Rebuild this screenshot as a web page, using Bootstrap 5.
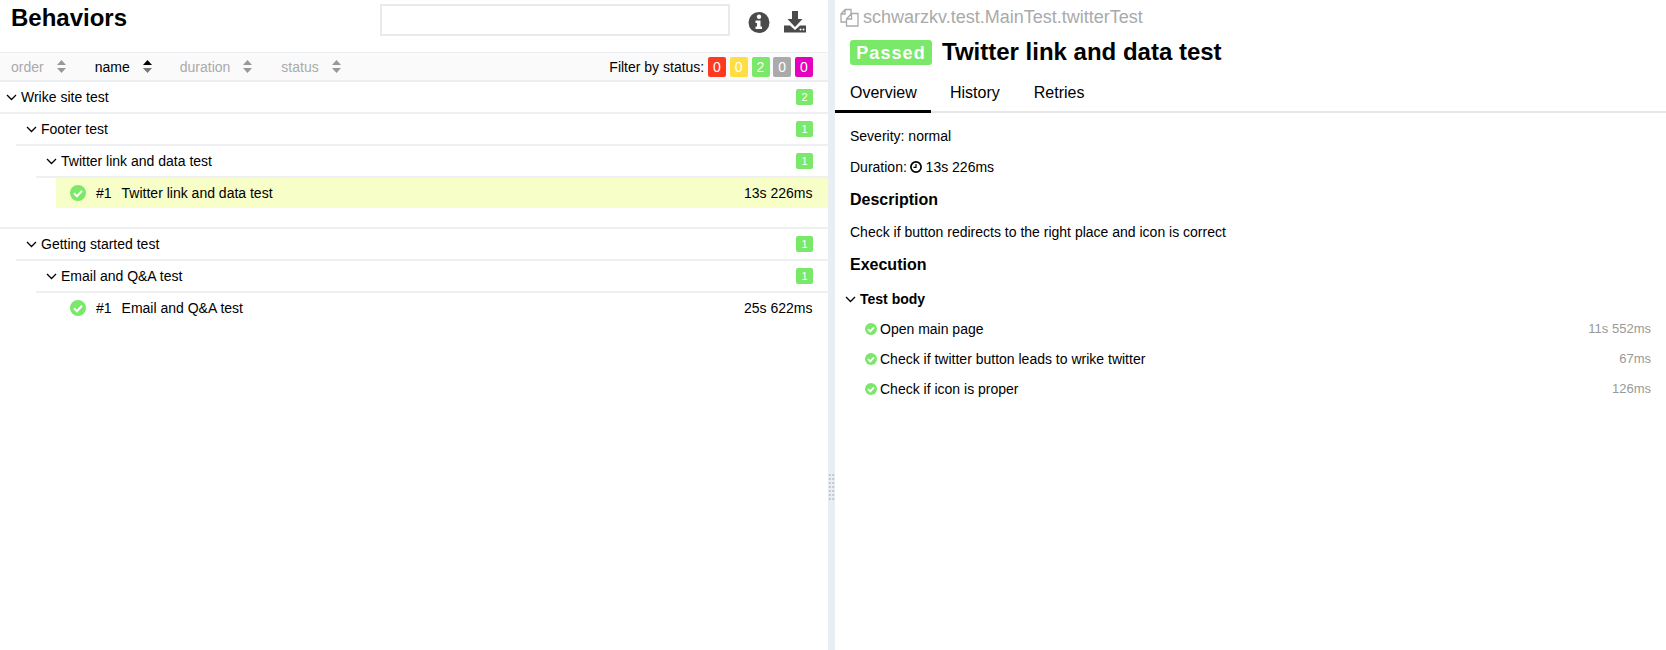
<!DOCTYPE html>
<html lang="en">
<head>
  <meta charset="UTF-8" />
  <title>Behaviors</title>
  <link href="https://cdn.jsdelivr.net/npm/bootstrap@5.3.0/dist/css/bootstrap.min.css" rel="stylesheet" />
  <style>
    html, body { height: 100%; overflow: hidden; }
    body { font-family: "Liberation Sans", Arial, sans-serif; font-size: 14px; line-height: 20px; color: #000; }
    .app-wrap { height: 650px; }
    .side-pane { width: 828px; flex: none; }
    .splitter { width: 7px; flex: none; background: #e9eef2; }
    .grip { width: 7px; height: 28px; margin-top: 473px; background-image: radial-gradient(circle, #bfc3c6 1.2px, transparent 1.4px); background-size: 3.5px 4px; }
    .main-pane { flex: 1; min-width: 0; }

    .side-head { height: 52px; padding: 3px 0 0 11px; }
    .side-title { font-size: 24px; line-height: 30px; font-weight: 700; margin: 0; }
    .search-box { width: 350px; height: 32px; margin: 1px 0 0 auto; border: 2px solid #e8ebee; }
    .head-icons { width: 98px; padding: 8px 0 0 18px; gap: 13px; }
    .sort-bar { height: 30px; background: #fafafa; border-top: 1px solid #eceff2; border-bottom: 2px solid #eceff2; padding: 0 15px 0 11px; }
    .sort-item { color: #aaa; margin-right: 26px; display: inline-flex; align-items: center; gap: 13px; }
    .sort-item.is-on { color: #000; }
    .stat-btn { width: 18px; height: 20px; border-radius: 2px; color: #fff; text-align: center; line-height: 20px; margin-left: 3.75px; }
    .stat-fail { background: #fd3a20; }
    .stat-broken { background: #ffde43; }
    .stat-pass { background: #7ae868; }
    .stat-skip { background: #aaa; }
    .stat-unknown { background: #e500bd; }
    .group-row { height: 32px; border-bottom: 2px solid #eef0f2; padding-right: 15px; }
    .lvl-0 { padding-left: 6px; }
    .lvl-1 { margin-left: 16px; padding-left: 10px; }
    .lvl-2 { margin-left: 36px; padding-left: 10px; }
    .group-name { margin-left: 4px; }
    .count-tag { width: 17px; height: 16px; border-radius: 2px; background: #7ae868; color: #fff; font-size: 11px; line-height: 16px; text-align: center; }
    .leaf-row { margin-left: 56px; height: 30px; padding: 0 15.5px 0 14px; }
    .leaf-row.is-picked { background: #f8fec8; }
    .leaf-num { margin: 0 10px 0 10px; }
    .tree-gap { height: 21px; border-bottom: 2px solid #eef0f2; }

    .full-name { height: 34px; padding-left: 5px; font-size: 18px; color: #aaa; gap: 4px; }
    .title-line { height: 32px; padding-left: 15px; gap: 10px; margin-top: 2px; }
    .passed-tag { width: 82px; height: 25px; border-radius: 3px; background: #7ae868; color: #fff; font-size: 18px; font-weight: 700; letter-spacing: 1.1px; text-align: center; line-height: 26px; }
    .test-title { font-size: 24px; line-height: 30px; font-weight: 700; margin: 0; }
    .tab-strip { height: 45px; border-bottom: 2px solid #e6e9ec; }
    .tab-item { font-size: 16px; padding: 0 15px; color: #000; line-height: 50px; height: 45px; margin-bottom: -2px; }
    .tab-item.is-on { border-bottom: 3px solid #000; width: 96px; }
    .tab-pad { padding: 0 15px; }
    .info-line { margin: 0; }
    .clock-ico { margin: 0 -0.5px; }
    .sect-head { font-size: 16px; font-weight: 700; line-height: 20px; margin: 0; }
    .steps-wrap { padding: 0 15px 0 10px; }
    .step-row { height: 30px; padding-left: 20px; gap: 3px; }
    .step-time { margin-left: auto; font-size: 13px; color: #999; }
  </style>
</head>
<body>
  <div class="app-wrap d-flex">
    <div class="side-pane">
      <div class="side-head d-flex">
        <h2 class="side-title">Behaviors</h2>
        <div class="search-box"></div>
        <div class="head-icons d-flex">
          <svg width="22" height="22" viewBox="0 0 22 22"><circle cx="11" cy="11.500" r="10.500" fill="#4a4a4a"/><circle cx="11" cy="5.800" r="2.200" fill="#fff"/><path d="M7.500 9.500h5v6h1.500v2.500H7.500v-2.500h1.500v-3.500H7.500z" fill="#fff"/></svg>
          <svg width="24" height="23" viewBox="0 0 24 23" style="margin-top:-1px"><path d="M9 1h6v8h4.500L12 17 4.500 9H9z" fill="#4a4a4a"/><path d="M1 15.500h6l5 4.500 5-4.500h6V22.500H1z" fill="#4a4a4a"/><circle cx="17.500" cy="19.500" r="1" fill="#fff"/><circle cx="20.500" cy="19.500" r="1" fill="#fff"/></svg>
        </div>
      </div>

      <div class="sort-bar d-flex align-items-center">
        <span class="sort-item">order <svg width="9" height="13" viewBox="0 0 9 13"><path d="M4.500 0L9 5H0zM4.500 13L0 8h9z" fill="#999"/></svg></span>
        <span class="sort-item is-on" style="margin-left:3px">name <svg width="9" height="13" viewBox="0 0 9 13"><path d="M4.500 0L9 5H0z" fill="#000"/><path d="M4.500 13L0 8h9z" fill="#777"/></svg></span>
        <span class="sort-item" style="margin-left:2px">duration <svg width="9" height="13" viewBox="0 0 9 13"><path d="M4.500 0L9 5H0zM4.500 13L0 8h9z" fill="#999"/></svg></span>
        <span class="sort-item" style="margin-left:3px">status <svg width="9" height="13" viewBox="0 0 9 13"><path d="M4.500 0L9 5H0zM4.500 13L0 8h9z" fill="#999"/></svg></span>
        <span class="ms-auto">Filter by status:</span>
        <span class="stat-btn stat-fail">0</span>
        <span class="stat-btn stat-broken">0</span>
        <span class="stat-btn stat-pass">2</span>
        <span class="stat-btn stat-skip">0</span>
        <span class="stat-btn stat-unknown">0</span>
      </div>

      <div class="group-row lvl-0 d-flex align-items-center">
        <svg width="11" height="7" viewBox="0 0 11 7"><path d="M1 1l4.500 4.500L10 1" fill="none" stroke="#000" stroke-width="1.300"/></svg>
        <span class="group-name">Wrike site test</span><span class="count-tag ms-auto">2</span>
      </div>
      <div class="group-row lvl-1 d-flex align-items-center">
        <svg width="11" height="7" viewBox="0 0 11 7"><path d="M1 1l4.500 4.500L10 1" fill="none" stroke="#000" stroke-width="1.300"/></svg>
        <span class="group-name">Footer test</span><span class="count-tag ms-auto">1</span>
      </div>
      <div class="group-row lvl-2 d-flex align-items-center">
        <svg width="11" height="7" viewBox="0 0 11 7"><path d="M1 1l4.500 4.500L10 1" fill="none" stroke="#000" stroke-width="1.300"/></svg>
        <span class="group-name">Twitter link and data test</span><span class="count-tag ms-auto">1</span>
      </div>
      <div class="leaf-row is-picked d-flex align-items-center">
        <svg width="16" height="16" viewBox="0 0 16 16"><circle cx="8" cy="8" r="8" fill="#7ae868"/><path d="M4 8.200l3 3 5-5.400" fill="none" stroke="#fff" stroke-width="2"/></svg>
        <span class="leaf-num">#1</span><span>Twitter link and data test</span><span class="ms-auto">13s 226ms</span>
      </div>
      <div class="tree-gap"></div>
      <div class="group-row lvl-1 d-flex align-items-center">
        <svg width="11" height="7" viewBox="0 0 11 7"><path d="M1 1l4.500 4.500L10 1" fill="none" stroke="#000" stroke-width="1.300"/></svg>
        <span class="group-name">Getting started test</span><span class="count-tag ms-auto">1</span>
      </div>
      <div class="group-row lvl-2 d-flex align-items-center">
        <svg width="11" height="7" viewBox="0 0 11 7"><path d="M1 1l4.500 4.500L10 1" fill="none" stroke="#000" stroke-width="1.300"/></svg>
        <span class="group-name">Email and Q&amp;A test</span><span class="count-tag ms-auto">1</span>
      </div>
      <div class="leaf-row d-flex align-items-center">
        <svg width="16" height="16" viewBox="0 0 16 16"><circle cx="8" cy="8" r="8" fill="#7ae868"/><path d="M4 8.200l3 3 5-5.400" fill="none" stroke="#fff" stroke-width="2"/></svg>
        <span class="leaf-num">#1</span><span>Email and Q&amp;A test</span><span class="ms-auto">25s 622ms</span>
      </div>
    </div>

    <div class="splitter"><div class="grip"></div></div>

    <div class="main-pane">
      <div class="full-name d-flex align-items-center">
        <svg width="19" height="19" viewBox="0 0 19 19"><path d="M5 1.500L1 6v8h5.500M5 1.500h6v4.500M5 1.500V6H1" fill="none" stroke="#aaa" stroke-width="1.300"/><path d="M11.500 5.500L6.500 11v7h11.500V5.500zM11.500 5.500V11h-5" fill="none" stroke="#aaa" stroke-width="1.300"/></svg>
        <span>schwarzkv.test.MainTest.twitterTest</span>
      </div>
      <div class="title-line d-flex align-items-center">
        <span class="passed-tag">Passed</span>
        <h2 class="test-title">Twitter link and data test</h2>
      </div>
      <div class="tab-strip d-flex">
        <span class="tab-item is-on">Overview</span>
        <span class="tab-item" style="margin-left:4px">History</span>
        <span class="tab-item" style="margin-left:4px">Retries</span>
      </div>
      <div class="tab-pad">
        <p class="info-line" style="margin-top:13px">Severity: normal</p>
        <p class="info-line d-flex align-items-center" style="margin-top:11px">Duration:&nbsp;<svg class="clock-ico" width="12" height="12" viewBox="0 0 12 12"><circle cx="6" cy="6" r="5.100" fill="none" stroke="#000" stroke-width="1.700"/><path d="M6 3v3.300H3.500" fill="none" stroke="#000" stroke-width="1.200"/></svg>&nbsp;13s 226ms</p>
        <h3 class="sect-head" style="margin-top:13px">Description</h3>
        <p class="info-line" style="margin-top:12px">Check if button redirects to the right place and icon is correct</p>
        <h3 class="sect-head" style="margin-top:13px">Execution</h3>
      </div>
      <div class="steps-wrap" style="margin-top:9px">
        <div class="d-flex align-items-center fw-bold" style="height:30px;gap:4px">
          <svg width="11" height="7" viewBox="0 0 11 7"><path d="M1 1l4.500 4.500L10 1" fill="none" stroke="#000" stroke-width="1.300"/></svg>
          <span>Test body</span>
        </div>
        <div class="step-row d-flex align-items-center">
          <svg width="12" height="12" viewBox="0 0 16 16"><circle cx="8" cy="8" r="8" fill="#7ae868"/><path d="M4 8.200l3 3 5-5.400" fill="none" stroke="#fff" stroke-width="2.400"/></svg>
          <span>Open main page</span><span class="step-time">11s 552ms</span>
        </div>
        <div class="step-row d-flex align-items-center">
          <svg width="12" height="12" viewBox="0 0 16 16"><circle cx="8" cy="8" r="8" fill="#7ae868"/><path d="M4 8.200l3 3 5-5.400" fill="none" stroke="#fff" stroke-width="2.400"/></svg>
          <span>Check if twitter button leads to wrike twitter</span><span class="step-time">67ms</span>
        </div>
        <div class="step-row d-flex align-items-center">
          <svg width="12" height="12" viewBox="0 0 16 16"><circle cx="8" cy="8" r="8" fill="#7ae868"/><path d="M4 8.200l3 3 5-5.400" fill="none" stroke="#fff" stroke-width="2.400"/></svg>
          <span>Check if icon is proper</span><span class="step-time">126ms</span>
        </div>
      </div>
    </div>
  </div>
  <script src="https://cdn.jsdelivr.net/npm/bootstrap@5.3.0/dist/js/bootstrap.bundle.min.js"></script>
</body>
</html>
